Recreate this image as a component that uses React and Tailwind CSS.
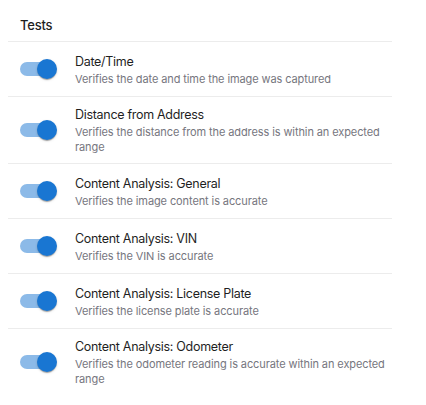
import React from "react";

const tests = [
  { title: "Date/Time", desc: "Verifies the date and time the image was captured" },
  { title: "Distance from Address", desc: "Verifies the distance from the address is within an expected range" },
  { title: "Content Analysis: General", desc: "Verifies the image content is accurate" },
  { title: "Content Analysis: VIN", desc: "Verifies the VIN is accurate" },
  { title: "Content Analysis: License Plate", desc: "Verifies the license plate is accurate" },
  { title: "Content Analysis: Odometer", desc: "Verifies the odometer reading is accurate within an expected range" },
];

function Toggle() {
  return (
    <div className="relative w-[67px] h-[38px] shrink-0">
      <div className="absolute left-3 top-3 w-[34px] h-[14px] rounded-full bg-[#8cbae8]" />
      <div className="absolute left-[29px] top-[9px] w-5 h-5 rounded-full bg-[#1976d2] shadow-[0px_2px_1px_-1px_rgba(0,0,0,0.2),0px_1px_1px_0px_rgba(0,0,0,0.14),0px_1px_3px_0px_rgba(0,0,0,0.12)]" />
    </div>
  );
}

export default function App() {
  return (
    <div className="w-[426px] h-[405px] bg-white overflow-hidden font-['Inter',sans-serif]">
      <div className="ml-2 w-[384px]">
        <div className="h-[42px] box-border pt-4 pl-3 border-b border-[#ececec] text-[13px] leading-[18px] font-medium tracking-[-0.2px] text-[#1f1f1f]">
          Tests
        </div>
        {tests.map((t, i) => (
          <div
            key={t.title}
            className={
              i === tests.length - 1
                ? "flex items-center min-h-[55px] py-2 box-border"
                : "flex items-center min-h-[55px] py-2 box-border border-b border-[#ececec]"
            }
          >
            <Toggle />
            <div className="flex-1 min-w-0">
              <div className="text-[12.5px] leading-[20px] tracking-[-0.3px] text-[#1f1f1f]">{t.title}</div>
              <div className="text-[11px] leading-[15px] tracking-[-0.1px] text-[#76767e]">{t.desc}</div>
            </div>
          </div>
        ))}
      </div>
    </div>
  );
}
